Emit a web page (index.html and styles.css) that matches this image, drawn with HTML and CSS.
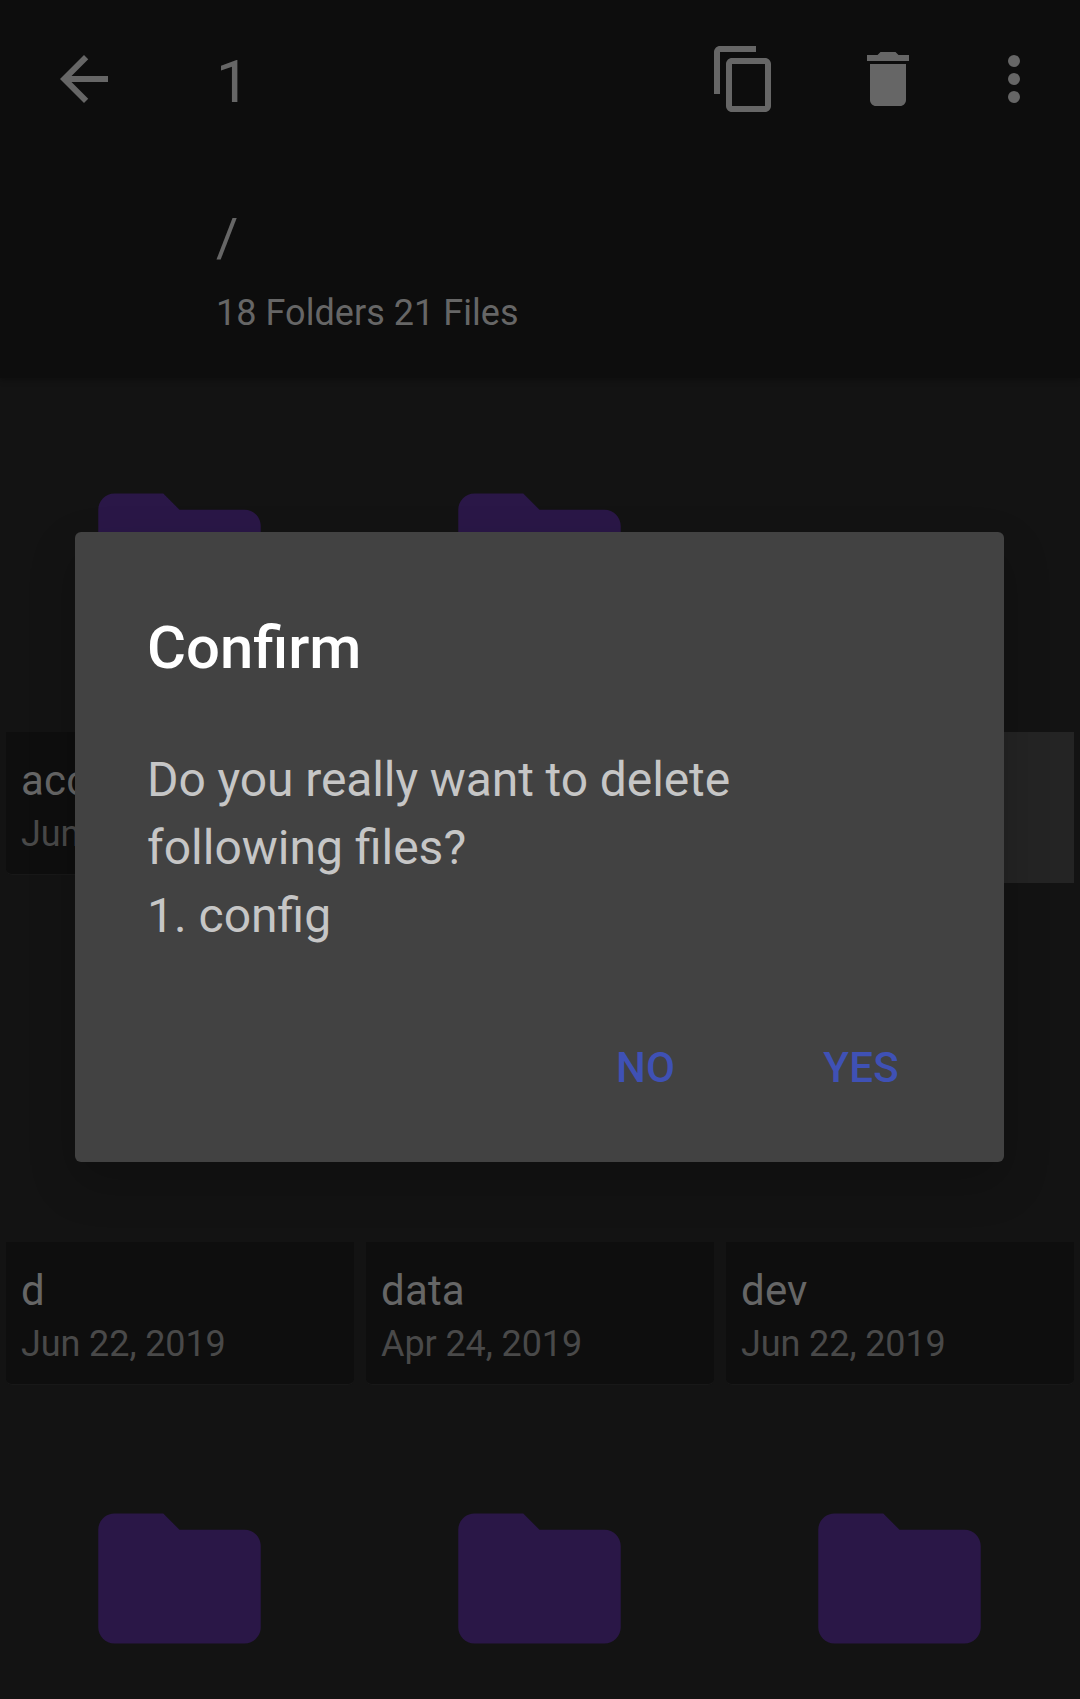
FILE: index.html
```html
<!DOCTYPE html>
<html lang="en">
<head>
<meta charset="utf-8">
<title>File manager</title>
<link rel="stylesheet" href="styles.css">
</head>
<body>
<svg class="defs" width="0" height="0" aria-hidden="true">
  <symbol id="folder" viewBox="0 0 24 24"><path d="M10 4H4c-1.1 0-2 .9-2 2v12c0 1.1.9 2 2 2h16c1.1 0 2-.9 2-2V8c0-1.1-.9-2-2-2h-8l-2-2z"/></symbol>
</svg>
<div class="screen">
  <header class="header">
    <div class="toolbar">
      <svg class="icon" viewBox="0 0 24 24"><path d="M20 11H7.83l5.59-5.59L12 4l-8 8 8 8 1.41-1.41L7.83 13H20v-2z"/></svg>
      <div class="count">1</div>
      <div class="actions">
        <svg class="icon copy" viewBox="0 0 24 24"><path d="M16 1H4c-1.1 0-2 .9-2 2v14h2V3h12V1zm3 4H8c-1.1 0-2 .9-2 2v14c0 1.1.9 2 2 2h11c1.1 0 2-.9 2-2V7c0-1.1-.9-2-2-2zm0 16H8V7h11v14z"/></svg>
        <svg class="icon delete" viewBox="0 0 24 24"><path d="M6 19c0 1.1.9 2 2 2h8c1.1 0 2-.9 2-2V7H6v12z"/><path d="M19 4h-3.500l-1-1h-5l-1 1H5v2h14V4z"/></svg>
        <svg class="icon" viewBox="0 0 24 24"><circle cx="12" cy="6" r="2"/><circle cx="12" cy="12" r="2"/><circle cx="12" cy="18" r="2"/></svg>
      </div>
    </div>
    <div class="location">
      <div class="path">/</div>
      <div class="summary">18 Folders 21 Files</div>
    </div>
  </header>
  <main class="grid">
    <article class="card">
      <div class="thumb"><svg class="folder"><use href="#folder"/></svg></div>
      <div class="label"><div class="name">acct</div><div class="date">Jun 22</div></div>
    </article>
    <article class="card">
      <div class="thumb"><svg class="folder"><use href="#folder"/></svg></div>
      <div class="label"></div>
    </article>
    <article class="card selected">
      <div class="thumb"></div>
      <div class="label"></div>
    </article>
    <article class="card">
      <div class="thumb"></div>
      <div class="label"><div class="name">d</div><div class="date">Jun 22, 2019</div></div>
    </article>
    <article class="card">
      <div class="thumb"></div>
      <div class="label"><div class="name">data</div><div class="date">Apr 24, 2019</div></div>
    </article>
    <article class="card">
      <div class="thumb"></div>
      <div class="label"><div class="name">dev</div><div class="date">Jun 22, 2019</div></div>
    </article>
    <article class="card"><div class="thumb"><svg class="folder"><use href="#folder"/></svg></div></article>
    <article class="card"><div class="thumb"><svg class="folder"><use href="#folder"/></svg></div></article>
    <article class="card"><div class="thumb"><svg class="folder"><use href="#folder"/></svg></div></article>
  </main>
  <section class="dialog" role="dialog">
    <h1 class="dialog-title">Confirm</h1>
    <p class="dialog-text"><span class="question">Do you really want to delete</span><br>following files?<br>1. config</p>
    <div class="buttons">
      <button class="button">NO</button>
      <button class="button">YES</button>
    </div>
  </section>
</div>
</body>
</html>
```
FILE: styles.css
```css
* { box-sizing: border-box; }
body { margin: 0; background: #131313; font-family: Roboto, sans-serif; }
.defs { display: block; }
.screen { position: relative; height: 1699px; overflow: hidden; background: #131313; }

.header { position: relative; height: 378px; background: #0d0d0d; color: #666; box-shadow: 0 2px 6px rgba(0, 0, 0, .3); }
.toolbar { display: flex; align-items: center; height: 158px; padding: 0 30px 0 48px; }
.icon { display: block; flex: none; width: 72px; height: 72px; fill: #666; }
.count { flex: 1; padding: 5px 0 0 96px; font-size: 60px; line-height: 70px; }
.actions { display: flex; }
.copy { margin-right: 72px; }
.delete { margin-right: 54px; }
.location { padding: 48px 0 0 216px; }
.path { font-size: 54px; line-height: 64px; }
.summary { margin-top: 22px; font-size: 36px; line-height: 42px; letter-spacing: .04px; }

.grid { display: grid; grid-template-columns: repeat(3, 348px); gap: 12px; padding: 6px; }
.card { height: 498px; }
.thumb { display: flex; align-items: center; justify-content: center; height: 348px; padding-right: 2px; }
.folder { width: 195px; height: 195px; fill: #2a1747; }
.label { height: 143px; padding: 24px 15px 0; border-bottom: 1px solid #181818; border-radius: 0 0 6px 6px; background: #0e0e0e; }
.selected .label { height: 151px; border: 0; border-radius: 0; background: #242424; }
.name { font-size: 42px; line-height: 50px; letter-spacing: .2px; color: #666; }
.date { margin-top: 7px; font-size: 36px; line-height: 42px; letter-spacing: -.1px; color: #494949; }

.dialog { position: absolute; left: 75px; top: 532px; width: 929px; height: 630px; padding: 81px 105px 0 72px; border-radius: 6px; background: #424242; box-shadow: 0 20px 48px rgba(0, 0, 0, .2); }
.dialog-title { margin: 0; font-size: 59.8px; line-height: 70px; font-weight: 500; color: #fff; }
.dialog-text { margin: 63px 0 0; font-size: 48px; line-height: 68px; color: #c6c6c6; white-space: nowrap; }
.question { letter-spacing: -.1px; }
.buttons { display: flex; justify-content: flex-end; gap: 148px; margin-top: 93px; }
.button { padding: 0; border: 0; background: none; font: 500 42px/50px Roboto, sans-serif; letter-spacing: .3px; color: #3f51b5; }
```
